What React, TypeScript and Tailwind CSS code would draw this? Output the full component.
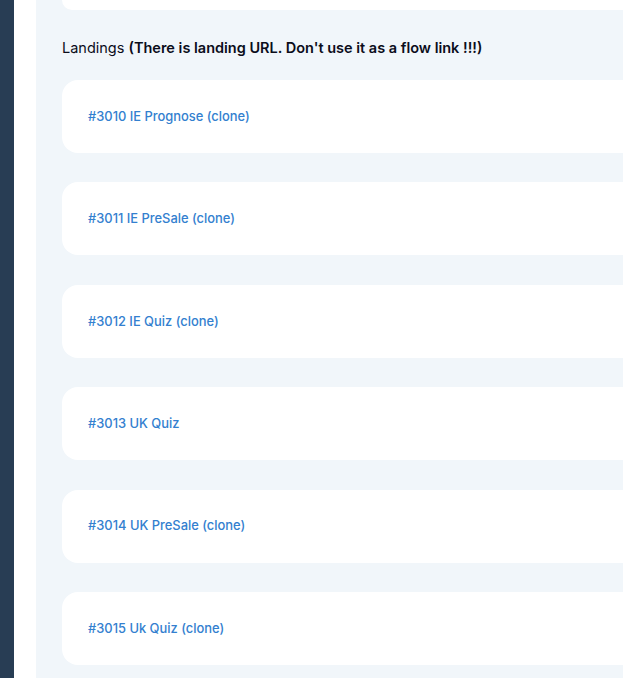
const landings = [
  "#3010 IE Prognose (clone)",
  "#3011 IE PreSale (clone)",
  "#3012 IE Quiz (clone)",
  "#3013 UK Quiz",
  "#3014 UK PreSale (clone)",
  "#3015 Uk Quiz (clone)",
];

export default function App() {
  return (
    <div className="flex h-[678px] overflow-hidden bg-white" style={{ fontFamily: "Inter, 'Noto Sans', sans-serif" }}>
      <aside className="w-[14px] shrink-0 bg-[#283d54]" />
      <div className="w-[22px] shrink-0 bg-white" />
      <main className="flex-1 bg-[#f1f6fa] pl-[26px] overflow-hidden">
        <div className="h-[10px] rounded-bl-[16px] bg-white" />
        <h2 className="mt-[27px] mb-[21px] text-[14.5px] leading-[22px] text-[#0b0d1a]">
          Landings <span className="font-semibold">(There is landing URL. Don't use it as a flow link !!!)</span>
        </h2>
        <div className="flex flex-col gap-[29.4px]">
          {landings.map((name) => (
            <div key={name} className="flex h-[73px] items-center rounded-l-[16px] bg-white pl-[26px]">
              <a className="text-[12.9px] font-medium text-[#3380cf] cursor-pointer">{name}</a>
            </div>
          ))}
        </div>
      </main>
    </div>
  );
}
